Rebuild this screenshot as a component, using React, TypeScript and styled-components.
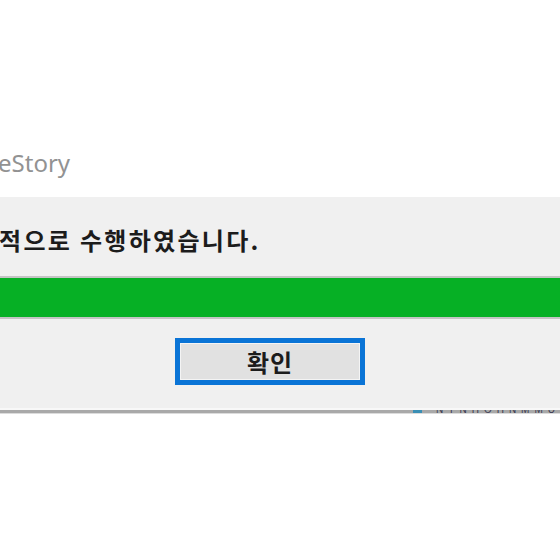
import styled, { createGlobalStyle } from "styled-components";

const GlobalStyle = createGlobalStyle`
  html, body {
    margin: 0;
    padding: 0;
    background: #ffffff;
    overflow: hidden;
  }
  #root {
    width: 560px;
    height: 560px;
    overflow: hidden;
  }
`;

const Screen = styled.div`
  display: flex;
  flex-direction: column;
  width: 560px;
  height: 560px;
  background: #ffffff;
`;

const TitleBar = styled.div`
  height: 197px;
  display: flex;
  align-items: flex-start;
  box-sizing: border-box;
  padding-top: 147px;
`;

const Title = styled.span`
  margin-left: -2px;
  font-family: "Noto Sans", "Open Sans", sans-serif;
  font-size: 24px;
  line-height: 32px;
  color: #929292;
`;

const DialogBody = styled.div`
  display: flex;
  flex-direction: column;
  background: #f0f0f0;
  padding: 31px 0 23px;
  box-sizing: border-box;
  height: 211px;
`;

const Message = styled.div`
  font-family: "Noto Sans CJK KR", "Noto Sans", sans-serif;
  font-size: 24px;
  font-weight: 700;
  line-height: 24px;
  letter-spacing: 2.3px;
  color: #1c1c1c;
  white-space: nowrap;
  margin-left: -1px;
`;

const ProgressTrack = styled.div`
  margin-top: 24px;
  height: 39px;
  border-top: 2px solid #c4c4c4;
  border-bottom: 2px solid #c4c4c4;
  background: #e6e6e6;
  display: flex;
`;

const ProgressFill = styled.div`
  height: 100%;
  background: #06b025;
`;

const ButtonRow = styled.div`
  display: flex;
  padding-left: 175px;
  margin-top: 19px;
`;

const DialogButton = styled.button`
  width: 190px;
  height: 47px;
  box-sizing: border-box;
  border: 5px solid #0a74d6;
  box-shadow: inset 0 0 0 1px #f4f4f4;
  background: #e1e1e1;
  padding: 0 0 1px;
  font-family: "Noto Sans CJK KR", "Noto Sans", sans-serif;
  font-size: 24px;
  font-weight: 700;
  letter-spacing: 1px;
  color: #1c1c1c;
  display: flex;
  align-items: center;
  justify-content: center;
`;

const Divider = styled.div`
  height: 3px;
  background: #a9a9a9;
  border-top: 2px solid #f8f8f8;
  border-bottom: 1px solid #dcdcdc;
  display: flex;
  align-items: flex-start;
  overflow: hidden;
  padding-left: 413px;
  gap: 14px;
`;

const PeekIcon = styled.span`
  width: 15px;
  height: 3px;
  background: #3a8fb5;
`;

const PeekText = styled.span`
  display: block;
  height: 3px;
  overflow: hidden;
  font-family: "Liberation Sans", sans-serif;
  font-size: 10px;
  line-height: 10px;
  letter-spacing: 5px;
  color: #3b3b52;
  white-space: nowrap;
`;

const PeekInner = styled.span`
  display: block;
  margin-top: -5px;
`;

export default function App() {
  const progress = 100;

  return (
    <Screen>
      <GlobalStyle />
      <TitleBar>
        <Title>eStory</Title>
      </TitleBar>
      <DialogBody>
        <Message>적으로 수행하였습니다.</Message>
        <ProgressTrack>
          <ProgressFill style={{ width: `${progress}%` }} />
        </ProgressTrack>
        <ButtonRow>
          <DialogButton>확인</DialogButton>
        </ButtonRow>
      </DialogBody>
      <Divider>
        <PeekIcon />
        <PeekText>
          <PeekInner>NTNHOHNMMUNHAANNI</PeekInner>
        </PeekText>
      </Divider>
    </Screen>
  );
}
